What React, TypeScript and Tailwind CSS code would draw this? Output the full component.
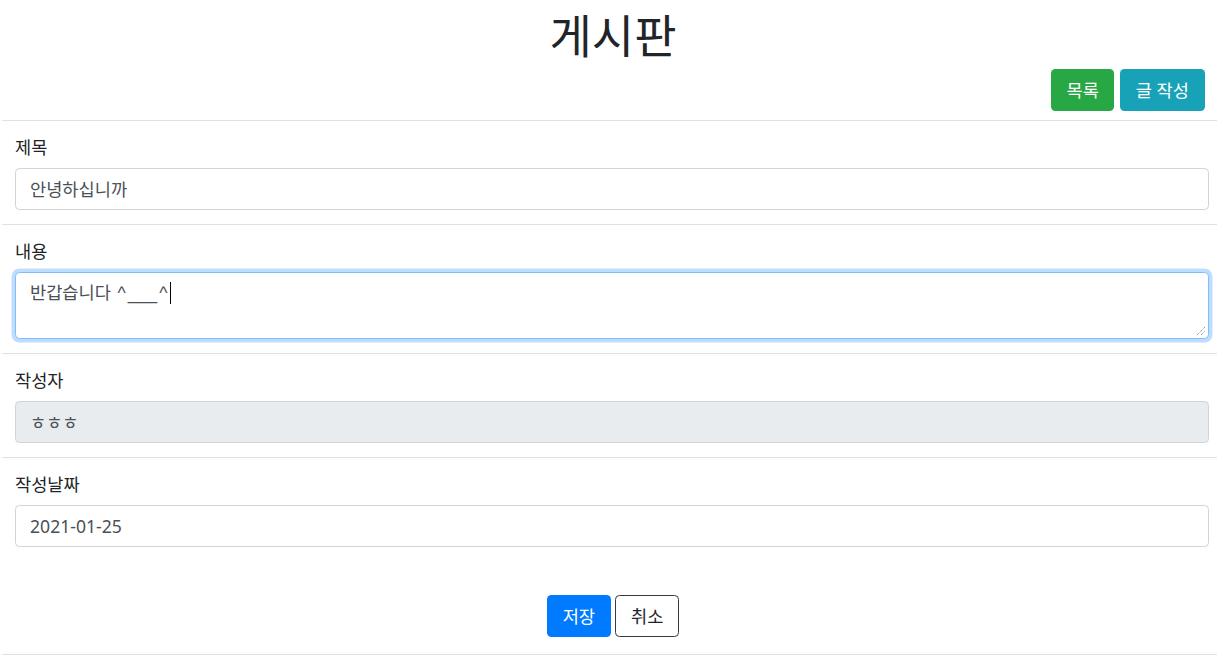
const font = "font-['Noto_Sans','Noto_Sans_CJK_KR',sans-serif]";

function Field({ label, children }: { label: string; children: React.ReactNode }) {
  return (
    <div className="border-t border-[#dee2e6] pt-[13px] pb-[14px] pl-[13px] pr-[8px]">
      <label className="block text-[17.6px] leading-[26px] mb-[8px] text-[#212529]">{label}</label>
      {children}
    </div>
  );
}

function TextInput({ value, disabled }: { value: string; disabled?: boolean }) {
  return (
    <div
      className={
        "h-[42px] rounded-[4.4px] border border-[#ced4da] px-[14px] flex items-center text-[17.6px] text-[#495057] " +
        (disabled ? "bg-[#e9ecef]" : "bg-white")
      }
    >
      {value}
    </div>
  );
}

export default function App() {
  return (
    <div className={`w-[1217px] h-[663px] overflow-hidden bg-white ${font}`}>
      <div className="ml-[2px]">
        {/* header */}
        <h1 className="pt-[8px] pl-[7px] text-center text-[46px] leading-[54px] text-[#212529]">게시판</h1>
        <div className="flex justify-end gap-[6px] pr-[12px] mt-[7px] mb-[9px]">
          <button className="h-[42px] px-[15px] rounded-[4.4px] bg-[#28a745] text-white text-[17.6px]">목록</button>
          <button className="h-[42px] px-[16px] rounded-[4.4px] bg-[#17a2b8] text-white text-[17.6px]">글 작성</button>
        </div>

        <Field label="제목">
          <TextInput value="안녕하십니까" />
        </Field>

        <Field label="내용">
          <div className="relative h-[67px] rounded-[4.4px] border border-[#80bdff] shadow-[0_0_0_3.5px_rgba(0,123,255,0.25)] bg-white px-[14px] py-[6px] text-[17.6px] leading-[26px] text-[#495057]">
            <span>반갑습니다 </span>
            <span className="font-['Liberation_Sans',sans-serif]">
              <span className="pl-[2px] pr-[2px]">^</span>___<span className="pl-[2px] pr-[2px]">^</span>
            </span>
            <span className="inline-block w-px h-[22px] bg-black align-middle -mt-[3px] ml-[1px]" />
            <svg className="absolute right-[2px] bottom-[2px]" width="10" height="10" viewBox="0 0 10 10">
              <line x1="1" y1="9" x2="9" y2="1" stroke="#777" strokeWidth="1" strokeDasharray="1 1" />
              <line x1="5" y1="9" x2="9" y2="5" stroke="#777" strokeWidth="1" strokeDasharray="1 1" />
            </svg>
          </div>
        </Field>

        <Field label="작성자">
          <TextInput value="ㅎㅎㅎ" disabled />
        </Field>

        <Field label="작성날짜">
          <TextInput value="2021-01-25" />
        </Field>

        <div className="flex justify-center gap-[4px] pl-[7px] pt-[34px] pb-[17px] border-b border-[#dee2e6]">
          <button className="h-[42px] px-[16px] rounded-[4.4px] bg-[#007bff] text-white text-[17.6px]">저장</button>
          <button className="h-[42px] px-[15px] rounded-[4.4px] border border-[#343a40] bg-white text-[#212529] text-[17.6px]">취소</button>
        </div>
      </div>
    </div>
  );
}
